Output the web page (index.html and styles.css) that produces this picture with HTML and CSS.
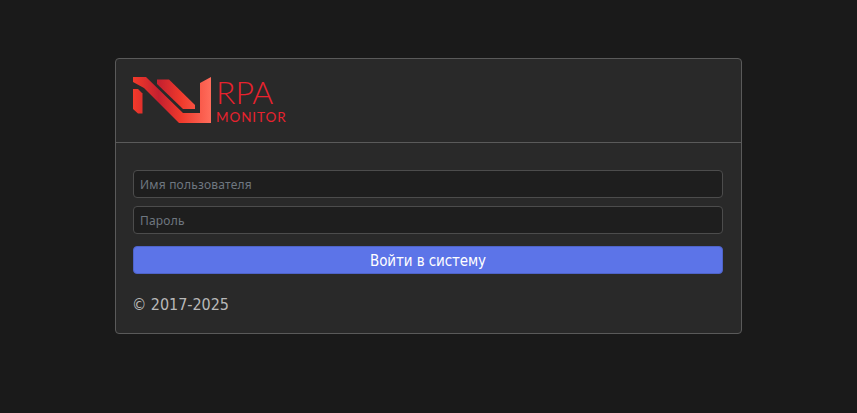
FILE: index.html
```html
<!DOCTYPE html>
<html lang="ru">
<head>
<meta charset="utf-8">
<title>RPA Monitor</title>
<link rel="stylesheet" href="styles.css">
</head>
<body>
<div class="card">
  <div class="card-header">
    <div class="logo">
      <svg class="logo-mark" width="78" height="48" viewBox="0 0 78 48">
        <defs>
          <linearGradient id="g" x1="0" y1="0" x2="78" y2="0" gradientUnits="userSpaceOnUse">
            <stop offset="0" stop-color="#f23a2a"/>
            <stop offset="0.33" stop-color="#c4202f"/>
            <stop offset="0.62" stop-color="#f03a2c"/>
            <stop offset="1" stop-color="#ff6d5c"/>
          </linearGradient>
        </defs>
        <path fill="url(#g)" d="M0 1H13L50 37H67V7L78 1V47H46L11 12L0 6Z"/>
        <path fill="url(#g)" d="M0 13H5L9.500 17.500V37.500H5L0 33Z"/>
        <path fill="url(#g)" d="M24 3.500H36L62 29V33H50L24 8Z"/>
      </svg>
      <div class="logo-text">
        <span class="logo-rpa">RPA</span>
        <span class="logo-monitor">MONITOR</span>
      </div>
    </div>
  </div>
  <form class="card-body">
    <input class="field" type="text" placeholder="Имя пользователя">
    <input class="field" type="password" placeholder="Пароль">
    <button class="submit" type="button">Войти в систему</button>
    <p class="copyright">© 2017-2025</p>
  </form>
</div>
</body>
</html>
```
FILE: styles.css
```css
* { box-sizing: border-box; }
html, body { margin: 0; padding: 0; }
body {
  background: #1a1a1a;
  height: 413px;
  overflow: hidden;
  padding-top: 58px;
  font-family: "DejaVu Sans Condensed", "DejaVu Sans", sans-serif;
}
.card {
  width: 627px;
  height: 276px;
  margin: 0 auto;
  background: #292929;
  border: 1px solid #5a5a5a;
  border-radius: 4px;
}
.card-header {
  height: 84px;
  padding: 17px 17px 0;
  border-bottom: 1px solid #5a5a5a;
}
.logo { display: flex; align-items: flex-start; gap: 6px; }
.logo-mark { display: block; flex: none; }
.logo-text { display: flex; flex-direction: column; color: #e8222e; font-family: Lato, sans-serif; }
.logo-rpa { font-size: 32px; line-height: 30px; font-weight: 300; margin-top: 1px; margin-left: -1px; }
.logo-monitor { font-size: 13.500px; line-height: 13px; letter-spacing: 0.9px; margin-top: 4px; margin-left: -1px; }
.card-body {
  display: flex;
  flex-direction: column;
  padding: 27px 18px 0 17px;
}
.field {
  height: 28px;
  margin-bottom: 8px;
  padding: 0 6px;
  background: #1e1e1e;
  border: 1px solid #4c4c4c;
  border-radius: 4px;
  color: #ccc;
  font: 12px "Noto Sans", sans-serif;
  letter-spacing: 0.2px;
  outline: none;
}
.field::placeholder { color: #6f7780; opacity: 1; }
.submit {
  height: 28px;
  margin-top: 4px;
  background: #5c74e8;
  border: 1px solid #4e63c8;
  border-radius: 4px;
  color: #fff;
  font: 15px "DejaVu Sans Condensed", "DejaVu Sans", sans-serif;
  letter-spacing: -0.1px;
  padding: 1px 0 0;
}
.copyright {
  margin: 21px 0 0 -1px;
  color: #b8b8b8;
  font-size: 16px;
  line-height: 20px;
  letter-spacing: -0.05px;
}
```
